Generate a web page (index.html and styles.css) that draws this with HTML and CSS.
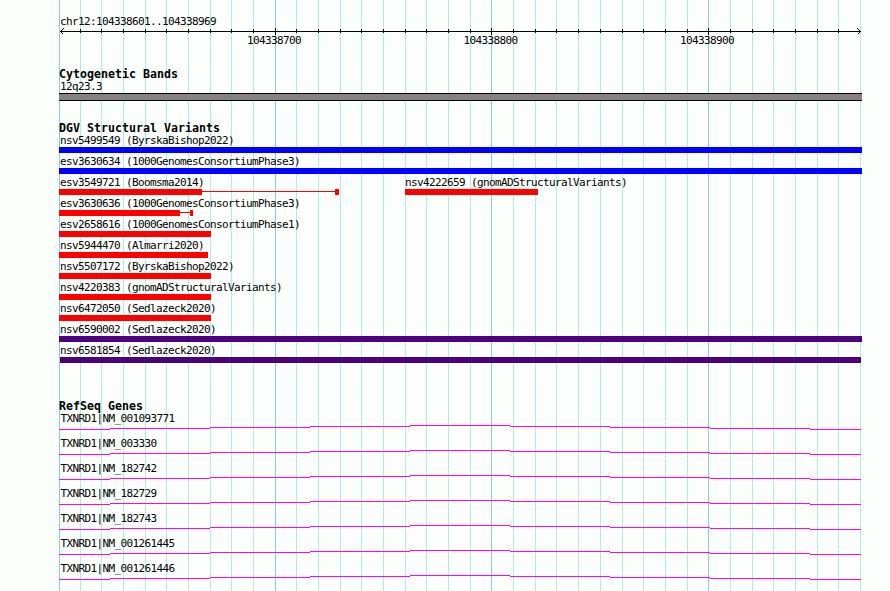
FILE: index.html
```
<!DOCTYPE html>
<html lang="en">
<head>
  <meta charset="UTF-8" />
  <title>chr12:104338601..104338969</title>
  <link rel="stylesheet" href="styles.css">
</head>
<body>
  <svg class="gridlines" width="890" height="591">
    <path class="minor" d="M80.5 0V591M101.5 0V591M123.5 0V591M145.5 0V591M166.5 0V591M188.5 0V591M210.5 0V591M231.5 0V591M253.5 0V591M296.5 0V591M318.5 0V591M340.5 0V591M361.5 0V591M383.5 0V591M405.5 0V591M426.5 0V591M448.5 0V591M470.5 0V591M513.5 0V591M535.5 0V591M556.5 0V591M578.5 0V591M600.5 0V591M622.5 0V591M643.5 0V591M665.5 0V591M687.5 0V591M730.5 0V591M752.5 0V591M773.5 0V591M795.5 0V591M817.5 0V591M838.5 0V591M860.5 0V591" />
    <path class="major" d="M59.5 0V591M275.5 0V591M491.5 0V591M708.5 0V591" />
  </svg>

  <main>
    <!-- Scale -->
    <header>
      <div class="label">chr12:104338601..104338969</div>
      <svg class="ruler" width="803" height="7">
        <path d="M1 3.5H802" />
        <path d="M21.5 1v4M42.5 1v4M64.5 1v4M86.5 1v4M107.5 1v4M129.5 1v4M151.5 1v4M172.5 1v4M194.5 1v4M237.5 1v4M259.5 1v4M281.5 1v4M302.5 1v4M324.5 1v4M346.5 1v4M367.5 1v4M389.5 1v4M411.5 1v4M454.5 1v4M476.5 1v4M497.5 1v4M519.5 1v4M541.5 1v4M563.5 1v4M584.5 1v4M606.5 1v4M628.5 1v4M671.5 1v4M693.5 1v4M714.5 1v4M736.5 1v4M758.5 1v4M779.5 1v4" />
        <path d="M216.5 0v7M432.5 0v7M649.5 0v7" />
        <path d="M4.5 0.5L1.5 3.5L4.5 6.5M798.5 0.5L801.5 3.5L798.5 6.5" />
      </svg>
      <div class="scale">
        <span>104338700</span>
        <span>104338800</span>
        <span>104338900</span>
      </div>
    </header>

    <!-- Cytobands -->
    <section>
      <h2>Cytogenetic Bands</h2>
      <div class="label">12q23.3</div>
      <div class="band"></div>
    </section>

    <!-- Structural variants -->
    <section class="variants">
      <h2>DGV Structural Variants</h2>
      <div class="row">
        <div class="variant">
          <div class="label">nsv5499549 (ByrskaBishop2022)</div>
          <div class="bar complex" style="width: 803px"></div>
        </div>
      </div>
      <div class="row">
        <div class="variant">
          <div class="label">esv3630634 (1000GenomesConsortiumPhase3)</div>
          <div class="bar complex" style="width: 803px"></div>
        </div>
      </div>
      <div class="row">
        <div class="variant">
          <div class="label">esv3549721 (Boomsma2014)</div>
          <div class="parts">
            <div class="bar loss" style="width: 143px"></div>
            <div class="link" style="width: 133px"></div>
            <div class="bar loss" style="width: 4px"></div>
          </div>
        </div>
        <div class="variant second">
          <div class="label">nsv4222659 (gnomADStructuralVariants)</div>
          <div class="bar loss" style="width: 133px"></div>
        </div>
      </div>
      <div class="row">
        <div class="variant">
          <div class="label">esv3630636 (1000GenomesConsortiumPhase3)</div>
          <div class="parts">
            <div class="bar loss" style="width: 121px"></div>
            <div class="link" style="width: 10px"></div>
            <div class="bar loss" style="width: 3px"></div>
          </div>
        </div>
      </div>
      <div class="row">
        <div class="variant">
          <div class="label">esv2658616 (1000GenomesConsortiumPhase1)</div>
          <div class="bar loss" style="width: 152px"></div>
        </div>
      </div>
      <div class="row">
        <div class="variant">
          <div class="label">nsv5944470 (Almarri2020)</div>
          <div class="bar loss" style="width: 149px"></div>
        </div>
      </div>
      <div class="row">
        <div class="variant">
          <div class="label">nsv5507172 (ByrskaBishop2022)</div>
          <div class="bar loss" style="width: 152px"></div>
        </div>
      </div>
      <div class="row">
        <div class="variant">
          <div class="label">nsv4220383 (gnomADStructuralVariants)</div>
          <div class="bar loss" style="width: 152px"></div>
        </div>
      </div>
      <div class="row">
        <div class="variant">
          <div class="label">nsv6472050 (Sedlazeck2020)</div>
          <div class="bar loss" style="width: 152px"></div>
        </div>
      </div>
      <div class="row">
        <div class="variant">
          <div class="label">nsv6590002 (Sedlazeck2020)</div>
          <div class="bar inversion" style="width: 803px"></div>
        </div>
      </div>
      <div class="row">
        <div class="variant">
          <div class="label">nsv6581854 (Sedlazeck2020)</div>
          <div class="bar inversion inset" style="width: 801px"></div>
        </div>
      </div>
    </section>

    <!-- Genes -->
    <section class="genes">
      <h2>RefSeq Genes</h2>
      <div class="gene">
        <div class="label">TXNRD1|NM_001093771</div>
        <svg class="intron" width="803" height="5">
          <path id="intron" d="M0 4.5H51M51 3.5H151M151 2.5H251M251 1.5H351M351 0.5H451M451 1.5H551M551 2.5H651M651 3.5H751M751 4.5H802" />
        </svg>
      </div>
      <div class="gene">
        <div class="label">TXNRD1|NM_003330</div>
        <svg class="intron" width="803" height="5"><use href="#intron" /></svg>
      </div>
      <div class="gene">
        <div class="label">TXNRD1|NM_182742</div>
        <svg class="intron" width="803" height="5"><use href="#intron" /></svg>
      </div>
      <div class="gene">
        <div class="label">TXNRD1|NM_182729</div>
        <svg class="intron" width="803" height="5"><use href="#intron" /></svg>
      </div>
      <div class="gene">
        <div class="label">TXNRD1|NM_182743</div>
        <svg class="intron" width="803" height="5"><use href="#intron" /></svg>
      </div>
      <div class="gene">
        <div class="label">TXNRD1|NM_001261445</div>
        <svg class="intron" width="803" height="5"><use href="#intron" /></svg>
      </div>
      <div class="gene">
        <div class="label">TXNRD1|NM_001261446</div>
        <svg class="intron" width="803" height="5"><use href="#intron" /></svg>
      </div>
    </section>
  </main>
</body>
</html>
```
FILE: styles.css
```
:root {
  --bg: #fcfefc;
  --minor: #aceeec;
  --major: #84ceec;
  --loss: #ff0000;
  --complex: #0000ff;
  --inversion: #4b0082;
  --gene: #ff00ff;
}

* {
  box-sizing: border-box;
  margin: 0;
  padding: 0;
}

body {
  width: 890px;
  height: 591px;
  overflow: hidden;
  background: var(--bg);
  color: #000;
  font: 11px/13px "DejaVu Sans Mono", monospace;
  letter-spacing: -0.622px;
}

svg {
  display: block;
  fill: none;
  shape-rendering: crispEdges;
}

/* Grid runs behind every track */
.gridlines {
  position: absolute;
  top: 0;
  left: 0;
  z-index: -1;
}

.minor {
  stroke: var(--minor);
}

.major {
  stroke: var(--major);
}

main {
  width: 803px;
  margin-left: 59px;
  padding-top: 15px;
}

.label {
  height: 13px;
  padding-left: 1px;
  white-space: nowrap;
}

h2 {
  height: 12px;
  font-size: 11.6px;
  line-height: 12px;
  letter-spacing: 0.016px;
}

section {
  margin-top: 21px;
}

/* Scale */
.ruler {
  stroke: #000;
}

.scale {
  display: flex;
  gap: 162.5px;
  margin-top: -1px;
  padding-left: 188px;
}

.scale span {
  width: 54px;
}

/* Cytobands */
.band {
  height: 8px;
  background: #848284;
  border: solid #000;
  border-width: 1px 0;
}

/* Structural variants */
.row {
  display: flex;
  margin-bottom: 2px;
}

.row:nth-child(4) .variant:first-child {
  width: 280px;
}

/* Fixed width keeps the long label from stretching the row */
.second {
  width: 133px;
  margin-left: 66px;
}

.second .label {
  margin-left: -1px;
}

.parts {
  display: flex;
  align-items: flex-start;
}

.bar {
  height: 6px;
}

.loss {
  background: var(--loss);
}

.complex {
  background: var(--complex);
}

.inversion {
  background: var(--inversion);
}

.inset {
  margin-left: 1px;
}

.link {
  height: 1px;
  margin-top: 2px;
  background: var(--loss);
}

/* Genes */
.genes {
  margin-top: 37px;
}

.gene {
  margin-bottom: 7px;
}

.gene .label {
  padding-left: 1.5px;
}

.intron {
  stroke: var(--gene);
}
```
